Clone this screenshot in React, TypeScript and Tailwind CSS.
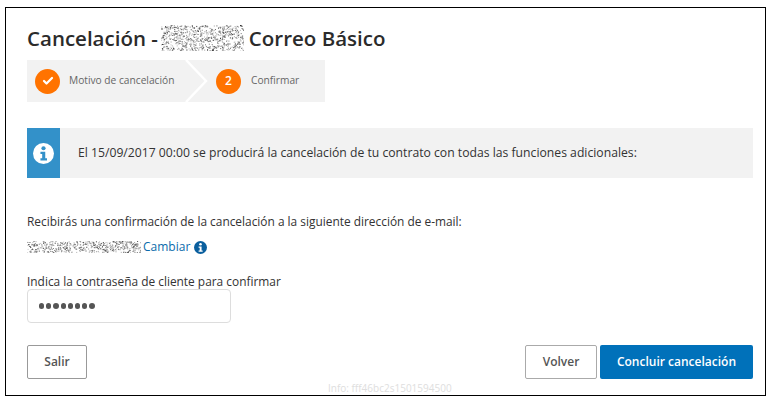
import { Check } from 'lucide-react';

// deterministic speckle for the blurred-out bits of the screenshot
function Scramble({ width, height, count, seed }: { width: number; height: number; count: number; seed: number }) {
  let s = seed;
  const next = () => {
    s = (s * 16807) % 2147483647;
    return s / 2147483647;
  };
  const dots = Array.from({ length: count }, () => ({
    x: next() * width,
    y: next() * height,
    g: Math.floor(next() * 130) + 30,
    o: 0.45 + next() * 0.55,
  }));
  return (
    <svg width={width} height={height} className="shrink-0">
      {dots.map((d, i) => (
        <rect key={i} x={d.x.toFixed(1)} y={d.y.toFixed(1)} width="1" height="1" fill={`rgb(${d.g},${d.g},${d.g})`} opacity={d.o} />
      ))}
    </svg>
  );
}

function CircleInfo({ size, color, dot }: { size: number; color: string; dot: string }) {
  return (
    <svg width={size} height={size} viewBox="0 0 24 24" className="shrink-0">
      <circle cx="12" cy="12" r="12" fill={color} />
      <circle cx="12" cy="6" r="2.4" fill={dot} />
      <path d="M8.5 10h5.5v7.5h2V20H8.5v-2.5h2V12.5h-2z" fill={dot} />
    </svg>
  );
}

export default function App() {
  return (
    <div className="w-[771px] h-[402px] bg-white pt-[7px] pl-[5px] font-['Open_Sans',sans-serif] text-[#333]">
      <div className="w-[761px] h-[389px] border border-black pl-[21px] pr-[12px] pt-[14px]">
        <h1 className="flex items-center h-[32px] text-[20.5px] font-semibold text-[#2b2b2b] leading-none">
          <span>Cancelación -</span>
          <span className="ml-[3px] mr-[5px]">
            <Scramble width={83} height={26} count={760} seed={77} />
          </span>
          <span>Correo Básico</span>
        </h1>

        <div className="relative flex w-[298px] h-[42px] mt-[6px] bg-[#f2f2f2] text-[10.2px] text-[#666]">
          <div className="flex items-center w-[189px] pl-[8px]">
            <span className="flex items-center justify-center w-[25px] h-[25px] rounded-full bg-[#ff7300]">
              <Check size={12} strokeWidth={4.5} className="text-white" />
            </span>
            <span className="ml-[9px]">Motivo de cancelación</span>
          </div>
          <div className="flex items-center">
            <span className="flex items-center justify-center w-[25px] h-[25px] rounded-full bg-[#ff7300] text-white text-[12px] font-semibold">
              2
            </span>
            <span className="ml-[10px]">Confirmar</span>
          </div>
          <svg width="24" height="42" className="absolute left-[158px] top-0">
            <path d="M1 0l20 21L1 42" fill="none" stroke="#fff" strokeWidth="2.5" />
          </svg>
        </div>

        <div className="flex items-stretch h-[50px] mt-[26px] bg-[#f2f2f2]">
          <div className="flex items-center justify-center w-[33px] bg-[#3391c9]">
            <CircleInfo size={21} color="#fff" dot="#3391c9" />
          </div>
          <p className="flex items-center pl-[18px] text-[12.2px] text-[#333]">
            El 15/09/2017 00:00 se producirá la cancelación de tu contrato con todas las funciones adicionales:
          </p>
        </div>

        <p className="mt-[34px] h-[18px] text-[11.9px] leading-[18px]">
          Recibirás una confirmación de la cancelación a la siguiente dirección de e-mail:
        </p>
        <div className="flex items-center h-[18px] mt-[8px] text-[12px]">
          <Scramble width={114} height={12} count={520} seed={31} />
          <a className="ml-[2px] text-[#0a6bab]">Cambiar</a>
          <span className="ml-[4px]">
            <CircleInfo size={13} color="#0a5f9e" dot="#fff" />
          </span>
        </div>

        <label className="block mt-[16px] h-[17px] text-[11.9px] leading-[18px]">
          Indica la contraseña de cliente para confirmar
        </label>
        <div className="flex items-center gap-[2px] w-[204px] h-[34px] pl-[11px] bg-white border border-[#dddddd] rounded-[4px]">
          {[0, 1, 2, 3, 4, 5, 6, 7].map((i) => (
            <span key={i} className="w-[5.2px] h-[5.2px] rounded-full bg-[#555]" />
          ))}
        </div>

        <div className="flex items-center mt-[22px] text-[12px] font-semibold">
          <button className="w-[60px] h-[34px] bg-white border border-[#999] rounded-[2px] text-[#555]">Salir</button>
          <button className="ml-auto w-[72px] h-[34px] bg-white border border-[#aaa] rounded-[2px] text-[#555]">Volver</button>
          <button className="ml-[3px] w-[153px] h-[34px] bg-[#0071ba] rounded-[2px] text-white">Concluir cancelación</button>
        </div>

        <p className="mt-[2px] ml-[301px] h-[14px] text-[10px] leading-[14px] text-[#dedede]">Info: fff46bc2s1501594500</p>
      </div>
    </div>
  );
}
